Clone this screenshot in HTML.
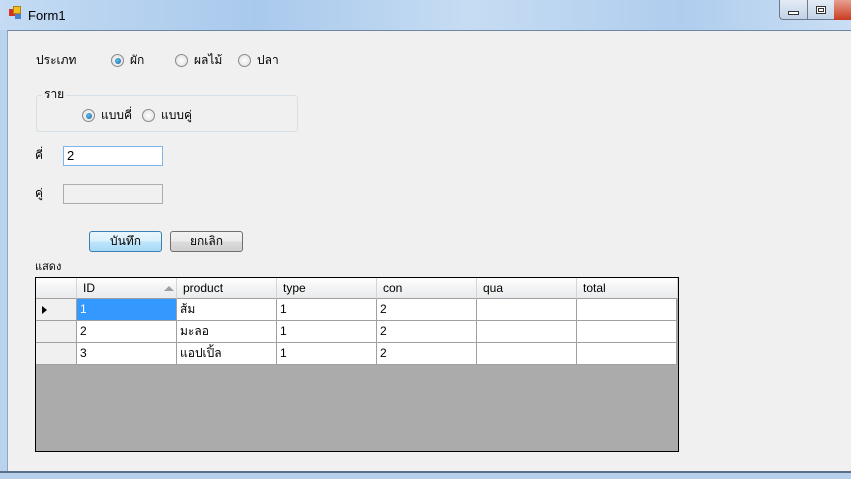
<!DOCTYPE html>
<html><head><meta charset="utf-8"><style>
*{margin:0;padding:0;box-sizing:border-box}
body{width:851px;height:479px;overflow:hidden;position:relative;background:#b9d3ee;font-family:"Liberation Sans","Noto Sans CJK SC",sans-serif;font-size:12px;color:#000}
.title{position:absolute;left:0;top:0;width:851px;height:30px;background:linear-gradient(90deg,#c4dbf3,#a9c9ec 30%,#c6dcf3 55%,#b0cdee 80%,#c9def4)}
.client{position:absolute;left:7px;top:30px;width:844px;height:441px;background:#f0f0f0;border-top:1px solid #6f86a2;border-left:1px solid #8ea6c2}
.bot{position:absolute;left:0;top:471px;width:851px;height:8px;background:#b6d0ee;border-top:2px solid #5a6f88}
.a{position:absolute;white-space:nowrap;line-height:15px}
.radio{position:absolute;width:13px;height:13px;border-radius:50%;border:1px solid #8a8a8a;background:radial-gradient(circle,#fff,#dcdcdc)}
.radio.on::after{content:"";position:absolute;left:2.5px;top:2.5px;width:6px;height:6px;border-radius:50%;background:radial-gradient(circle at 40% 40%,#5ac0ef,#1a5d9a)}
.btn{position:absolute;height:21px;border:1px solid #707070;border-radius:3px;background:linear-gradient(#f2f2f2,#ebebeb 50%,#dcdcdc 50%,#cfcfcf);text-align:center;line-height:18px}
.grid{position:absolute;left:35px;top:277px;width:644px;height:175px;border:1px solid #000;background:#ababab}
.c{position:absolute;background:#fff;border-right:1px solid #a0a0a0;border-bottom:1px solid #a0a0a0;padding-left:3px;line-height:21px}
.h{position:absolute;background:linear-gradient(#fff,#f3f3f3 50%,#e9ebee);border-right:1px solid #d5d5d5;border-bottom:1px solid #a0a0a0;padding-left:6px;line-height:21px}
</style></head><body>
<div class="title"></div>
<div class="a" style="left:9px;top:9px;width:7px;height:7px;background:#d83020"></div>
<div class="a" style="left:13px;top:6px;width:8px;height:8px;background:#f0c020;border:1px solid #b08010"></div>
<div class="a" style="left:15px;top:14px;width:6px;height:5px;background:#4a80d0"></div>
<div class="a" style="left:28px;top:8px;font-size:13px">Form1</div>
<div class="a" style="left:779px;top:0;width:72px;height:20px;border:1px solid #6a7a90;border-top:none;border-radius:0 0 0 4px;background:linear-gradient(#e4ecf5,#c2d2e6)"></div>
<div class="a" style="left:807px;top:0;width:1px;height:20px;background:#6a7a90"></div>
<div class="a" style="left:834px;top:0;width:17px;height:20px;background:linear-gradient(#e8a090,#c83c20)"></div>
<div class="a" style="left:788px;top:11px;width:11px;height:4px;border:1px solid #333;background:#fff"></div>
<div class="a" style="left:816px;top:6px;width:10px;height:8px;border:1px solid #333;background:#fff"><div style="margin:1px;width:6px;height:4px;border:1px solid #333"></div></div>
<div class="client"></div>
<div class="bot"></div>

<div class="a" style="left:36px;top:53px">ประเภท</div>
<div class="radio on" style="left:111px;top:54px"></div><div class="a" style="left:130px;top:53px">ผัก</div>
<div class="radio" style="left:175px;top:54px"></div><div class="a" style="left:194px;top:53px">ผลไม้</div>
<div class="radio" style="left:238px;top:54px"></div><div class="a" style="left:257px;top:53px">ปลา</div>

<div class="a" style="left:36px;top:95px;width:262px;height:37px;border:1px solid #d5dfe5;border-radius:3px"></div>
<div class="a" style="left:42px;top:87px;background:#f0f0f0;padding:0 2px">ราย</div>
<div class="radio on" style="left:82px;top:109px"></div><div class="a" style="left:101px;top:108px">แบบคี่</div>
<div class="radio" style="left:142px;top:109px"></div><div class="a" style="left:161px;top:108px">แบบคู่</div>

<div class="a" style="left:35px;top:148px">คี่</div>
<div class="a" style="left:63px;top:146px;width:100px;height:20px;border:1px solid #7eb4ea;background:#fff;padding-left:3px;line-height:18px;font-size:13px">2</div>
<div class="a" style="left:35px;top:186px">คู่</div>
<div class="a" style="left:63px;top:184px;width:100px;height:20px;border:1px solid #adadad;background:#f0f0f0"></div>

<div class="btn" style="left:89px;top:231px;width:73px;border-color:#3c7fb1;background:linear-gradient(#eaf6fd,#d9f0fc 50%,#bee6fd 50%,#a7d9f5)">บันทึก</div>
<div class="btn" style="left:170px;top:231px;width:73px">ยกเลิก</div>
<div class="a" style="left:35px;top:260px;font-size:11px">แสดง</div>

<div class="grid">
<div class="h" style="left:0;top:0;width:41px;height:21px"></div>
<div class="h" style="left:41px;top:0;width:100px;height:21px">ID<span style="position:absolute;left:87px;top:8px;width:0;height:0;border-left:5px solid transparent;border-right:5px solid transparent;border-bottom:5px solid #a0a0a0"></span></div>
<div class="h" style="left:141px;top:0;width:100px;height:21px">product</div>
<div class="h" style="left:241px;top:0;width:100px;height:21px">type</div>
<div class="h" style="left:341px;top:0;width:100px;height:21px">con</div>
<div class="h" style="left:441px;top:0;width:100px;height:21px">qua</div>
<div class="h" style="left:541px;top:0;width:101px;height:21px">total</div>

<div class="c" style="left:0;top:21px;width:41px;height:22px;background:#f0f0f0"><span style="position:absolute;left:6px;top:7px;border-top:4px solid transparent;border-bottom:4px solid transparent;border-left:5px solid #000"></span></div>
<div class="c" style="left:0;top:43px;width:41px;height:22px;background:#f0f0f0"></div>
<div class="c" style="left:0;top:65px;width:41px;height:22px;background:#f0f0f0"></div>

<div class="c" style="left:41px;top:21px;width:100px;height:22px;background:#3399ff;color:#fff">1</div>
<div class="c" style="left:141px;top:21px;width:100px;height:22px">ส้ม</div>
<div class="c" style="left:241px;top:21px;width:100px;height:22px">1</div>
<div class="c" style="left:341px;top:21px;width:100px;height:22px">2</div>
<div class="c" style="left:441px;top:21px;width:100px;height:22px"></div>
<div class="c" style="left:541px;top:21px;width:100px;height:22px"></div>

<div class="c" style="left:41px;top:43px;width:100px;height:22px">2</div>
<div class="c" style="left:141px;top:43px;width:100px;height:22px">มะลอ</div>
<div class="c" style="left:241px;top:43px;width:100px;height:22px">1</div>
<div class="c" style="left:341px;top:43px;width:100px;height:22px">2</div>
<div class="c" style="left:441px;top:43px;width:100px;height:22px"></div>
<div class="c" style="left:541px;top:43px;width:100px;height:22px"></div>

<div class="c" style="left:41px;top:65px;width:100px;height:22px">3</div>
<div class="c" style="left:141px;top:65px;width:100px;height:22px">แอปเปิ้ล</div>
<div class="c" style="left:241px;top:65px;width:100px;height:22px">1</div>
<div class="c" style="left:341px;top:65px;width:100px;height:22px">2</div>
<div class="c" style="left:441px;top:65px;width:100px;height:22px"></div>
<div class="c" style="left:541px;top:65px;width:100px;height:22px"></div>
</div>
</body></html>
